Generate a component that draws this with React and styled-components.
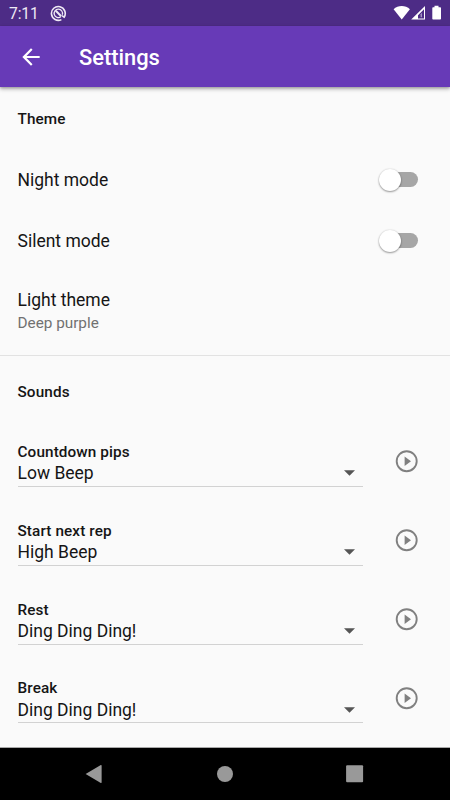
import React from "react";
import styled, { createGlobalStyle } from "styled-components";

const GlobalStyle = createGlobalStyle`
  * { box-sizing: border-box; }
  body { margin: 0; background: #fafafa; font-family: Roboto, "Liberation Sans", sans-serif; }
`;

const Screen = styled.div`
  width: 450px;
  height: 800px;
  display: flex;
  flex-direction: column;
  overflow: hidden;
  background: #fafafa;
  color: #151515;
`;

const StatusBar = styled.div`
  flex: none;
  height: 26px;
  padding: 0 8px 0 9px;
  display: flex;
  align-items: center;
  background: #4d2c86;
  color: #efeaf5;
`;

const Clock = styled.span`
  width: 41px;
  font-size: 15.6px;
  line-height: 26px;
  padding-top: 2px;
  letter-spacing: -0.1px;
`;

const StatusIcons = styled.div`
  margin-left: auto;
  display: flex;
`;

const AppBar = styled.header`
  flex: none;
  height: 61px;
  padding: 1px 0 0 18px;
  display: flex;
  align-items: center;
  gap: 35px;
  background: #673ab7;
  color: #fff;
  z-index: 1;
  box-shadow: 0 2px 4px rgba(0, 0, 0, 0.3), 0 1px 2px rgba(0, 0, 0, 0.15);
`;

const Title = styled.h1`
  margin: 0;
  padding-top: 2px;
  font-size: 21.9px;
  font-weight: 500;
  line-height: 28px;
  letter-spacing: -0.03px;
`;

const Content = styled.main`
  flex: 1;
  min-height: 0;
  overflow: hidden;
  border-bottom: 1px solid #a8a8a8;
`;

const SectionTitle = styled.h2`
  margin: 0;
  padding-left: 17.5px;
  height: ${(p) => p.$height}px;
  line-height: ${(p) => p.$line}px;
  font-size: 15.3px;
  font-weight: 500;
  letter-spacing: 0.11px;
`;

const SwitchRow = styled.div`
  height: 61px;
  padding: 0 31.7px 0 17.5px;
  display: flex;
  align-items: center;
  justify-content: space-between;
`;

const ItemText = styled.div`
  font-size: 17.5px;
  line-height: 22px;
`;

const Track = styled.div`
  width: 36px;
  height: 15px;
  border-radius: 8px;
  background: #a6a6a6;
  display: flex;
  align-items: center;
`;

const Thumb = styled.div`
  flex: none;
  width: 22px;
  height: 22px;
  margin-left: -3.7px;
  border-radius: 50%;
  background: #fff;
  box-shadow: 0 1px 2px rgba(0, 0, 0, 0.38), 0 0 2px rgba(0, 0, 0, 0.14);
`;

const ThemeItem = styled.div`
  height: 85px;
  padding: 18px 0 0 17.5px;
  border-bottom: 1px solid #e2e2e2;
`;

const Subtitle = styled.div`
  font-size: 15.3px;
  line-height: 24px;
  color: #717171;
`;

const SoundRow = styled.div`
  height: 78.75px;
  padding: 15px 31.5px 0 17.5px;
  display: flex;
  justify-content: space-between;
`;

const Field = styled.div`
  width: 345px;
  height: 44px;
  border-bottom: 1px solid #d2d2d2;
`;

const FieldLabel = styled.div`
  font-size: 15.3px;
  font-weight: 500;
  line-height: 18px;
  letter-spacing: 0.11px;
`;

const FieldValue = styled.div`
  display: flex;
  align-items: center;
  justify-content: space-between;
  height: 24.5px;
  padding-right: 8px;
`;

const PlayButton = styled.button`
  width: 24px;
  height: 24px;
  margin-top: 6.3px;
  padding: 0;
  border: 0;
  background: none;
  color: #808080;
`;

const Icon = styled.svg`
  display: block;
  flex: none;
`;

const NavBar = styled.nav`
  flex: none;
  height: 52px;
  padding: 0 86px 0 85px;
  display: flex;
  align-items: center;
  justify-content: space-between;
  background: #000;
  color: #999;
`;

function SwitchItem({ label }) {
  return (
    <SwitchRow>
      <ItemText>{label}</ItemText>
      <Track><Thumb /></Track>
    </SwitchRow>
  );
}

const sounds = [
  ["Countdown pips", "Low Beep"],
  ["Start next rep", "High Beep"],
  ["Rest", "Ding Ding Ding!"],
  ["Break", "Ding Ding Ding!"],
];

export default function App() {
  return (
    <>
      <GlobalStyle />
      <Screen>
        <StatusBar>
          <Clock>7:11</Clock>
          <Icon width="17" height="17" viewBox="0 0 17 17" fill="none" stroke="currentColor">
            <path d="M11.4 14.6A6.9 6.9 0 1 1 14.1 12.2L12 10.6" strokeWidth="1.6" />
            <path d="M10.8 11.8A4.2 4.2 0 1 1 12.3 9.8" strokeWidth="1.3" />
            <path d="M5.8 5.8l5.4 5.4" strokeWidth="2" />
          </Icon>
          <StatusIcons>
            <Icon width="49" height="16" viewBox="0 0 49 16" fill="#fff">
              <path d="M.6 4.2C5-.1 12.5-.1 16.9 4.2L8.75 14.5Z" />
              <path fillRule="evenodd" d="M32 1v13.6H18.2ZM31 4.2l-6 6v3.3h6Z" />
              <path d="M27.6 9.2l1.4-1.4v4.4h-1.4Z" opacity=".5" />
              <path d="M41.5.8h4v1.5h1.7q.8 0 .8.8v10.7q0 .8-.8.8h-7.1q-.8 0-.8-.8V3.1q0-.8.8-.8h1.4Z" />
            </Icon>
          </StatusIcons>
        </StatusBar>
        <AppBar>
          <Icon width="26" height="26" viewBox="0 0 24 24" fill="currentColor">
            <path d="M20 11H7.83l5.59-5.59L12 4l-8 8 8 8 1.41-1.41L7.83 13H20v-2z" />
          </Icon>
          <Title>Settings</Title>
        </AppBar>
        <Content>
          <SectionTitle $height={62} $line={64}>Theme</SectionTitle>
          <SwitchItem label="Night mode" />
          <SwitchItem label="Silent mode" />
          <ThemeItem>
            <ItemText>Light theme</ItemText>
            <Subtitle>Deep purple</Subtitle>
          </ThemeItem>
          <SectionTitle $height={72} $line={73}>Sounds</SectionTitle>
          {sounds.map(([label, value]) => (
            <SoundRow key={label}>
              <Field>
                <FieldLabel>{label}</FieldLabel>
                <FieldValue>
                  <ItemText>{value}</ItemText>
                  <Icon width="11" height="6" viewBox="0 0 11 6" fill="#555">
                    <path d="M0 .3h11L5.5 5.8Z" />
                  </Icon>
                </FieldValue>
              </Field>
              <PlayButton aria-label={`Play ${value}`}>
                <Icon width="24" height="24" viewBox="0 0 24 24" fill="currentColor">
                  <circle cx="11.7" cy="12.2" r="10" fill="none" stroke="currentColor" strokeWidth="1.9" />
                  <path d="M9.6 7.5v9.4l6.4-4.7Z" />
                </Icon>
              </PlayButton>
            </SoundRow>
          ))}
        </Content>
        <NavBar>
          <Icon width="18" height="20" viewBox="0 0 18 20" fill="currentColor">
            <path d="M.6 10 15.8 1.1q.8-.3.8.6v16.6q0 .9-.8.6Z" />
          </Icon>
          <Icon width="16" height="16" viewBox="0 0 16 16" fill="currentColor">
            <circle cx="8" cy="8" r="8" />
          </Icon>
          <Icon width="18" height="18" viewBox="0 0 18 18" fill="currentColor">
            <rect x=".1" y=".3" width="17" height="17" rx="1" />
          </Icon>
        </NavBar>
      </Screen>
    </>
  );
}
